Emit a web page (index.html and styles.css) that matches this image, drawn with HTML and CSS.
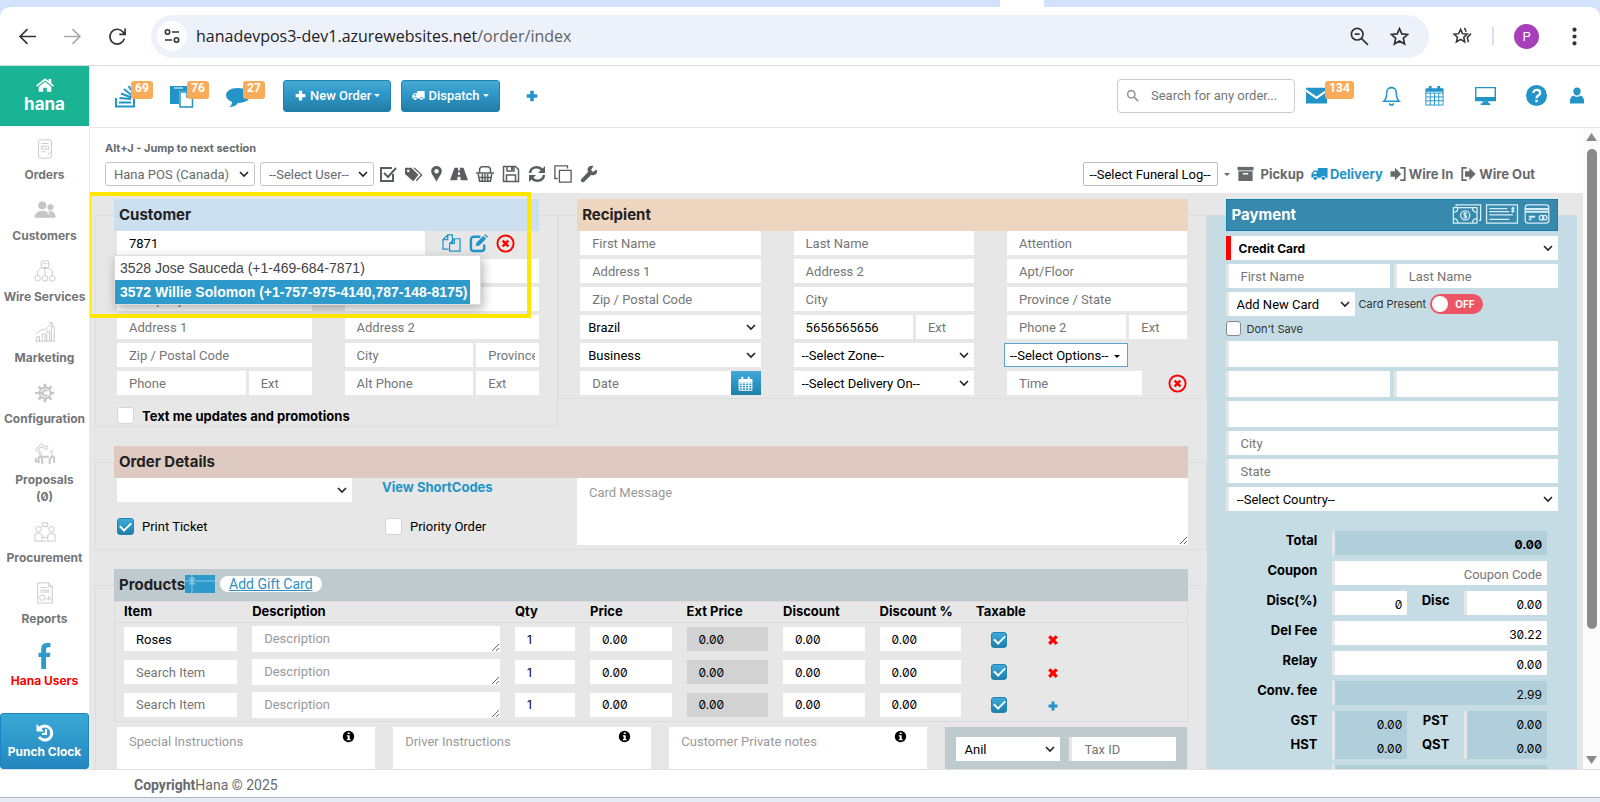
FILE: index.html
```html
<!DOCTYPE html>
<html lang="en">

<head>
    <meta charset="utf-8">
    <title>Hana POS - Order</title>
    <link rel="stylesheet" href="styles.css">
</head>

<body>
    <svg class="sprite" aria-hidden="true">
        <symbol id="i-plus" viewBox="0 0 16 16"><path d="M6 2h4v4h4v4h-4v4H6v-4H2V6h4z" /></symbol>
        <symbol id="i-times" viewBox="0 0 16 16"><path d="M4.500 1.500 8 5l3.500-3.500 3 3L11 8l3.500 3.500-3 3L8 11l-3.500 3.500-3-3L5 8 1.500 4.500z" /></symbol>
        <symbol id="i-truck" viewBox="0 0 20 16"><path d="M8 1h11.500v11.500H17a2.500 2.500 0 0 0-5 0H7.500a2.500 2.500 0 0 0-5 0H.500V7.500L3.500 4H8zM6.500 5.500H4.200L2.200 8h4.300z" fill-rule="evenodd" /><circle cx="5" cy="13" r="2" /><circle cx="14.500" cy="13" r="2" /></symbol>
        <symbol id="i-close" viewBox="0 0 20 20"><circle cx="10" cy="10" r="8.500" fill="none" stroke="currentColor" stroke-width="2" /><path d="m7 7 6 6m0-6-6 6" stroke="currentColor" stroke-width="2.600" /></symbol>
        <symbol id="i-calendar" viewBox="0 0 20 20"><path d="M1.500 5h17v14h-17zM1.500 9.500h17M1.500 12.500h17M1.500 15.700h17M5.700 8v11M10 8v11M14.300 8v11" fill="none" stroke="currentColor" stroke-width="1.300" /><path d="M1 4h18v4.500H1zM4.500 1h2.500v5H4.500zM13 1h2.500v5H13z" /></symbol>
        <symbol id="i-info" viewBox="0 0 16 16"><circle cx="8" cy="8" r="7" /><path d="M7 3h2.500v2H7zM6 6.500h3.500v4.500h1v1.500H6V11h1V8H6z" fill="#fff" /></symbol>
        <symbol id="i-mail" viewBox="0 0 20 16"><path d="M0 1h20v1.500l-10 7-10-7zM0 5l10 7 10-7v11H0z" /></symbol>
    </svg>

    <header class="browser">
        <div class="tabs"><span class="tab"></span></div>
        <div class="toolbar">
            <button class="nav-btn" aria-label="Back"><svg viewBox="0 0 18 18"><path d="M17 9H2M9 2 2 9l7 7" /></svg></button>
            <button class="nav-btn off" aria-label="Forward"><svg viewBox="0 0 18 18"><path d="M1 9h15M9 2l7 7-7 7" /></svg></button>
            <button class="nav-btn" aria-label="Reload"><svg viewBox="0 0 18 18"><path d="M15.500 11A7 7 0 1 1 14 4.500L16 7M16.200 1.500V7h-5.500" /></svg></button>
            <div class="address">
                <span class="site-info"><svg viewBox="0 0 18 18"><circle cx="4.500" cy="5" r="2.200" /><path d="M9 5h7M2 13h7" /><circle cx="13.500" cy="13" r="2.200" /></svg></span>
                <span class="url">hanadevpos3-dev1.azurewebsites.net<span class="path">/order/index</span></span>
                <button class="nav-btn" aria-label="Zoom"><svg viewBox="0 0 18 18"><circle cx="6.800" cy="6.800" r="5.500" /><path d="m11 11 6 6M4.500 6.800h4.600" /></svg></button>
                <button class="nav-btn" aria-label="Bookmark"><svg viewBox="0 0 18 18"><path d="m9 1.500 2.200 5 5.500.5-4.100 3.700 1.200 5.400L9 13.200l-4.800 2.900 1.200-5.400L1.300 7l5.500-.5z" /></svg></button>
            </div>
            <button class="nav-btn" aria-label="Favorites"><svg viewBox="0 0 20 18"><path d="m8 2.500 2 4.500 5 .5-3.700 3.300 1.100 4.900L8 13.100l-4.400 2.600 1.100-4.900L1 7.500 6 7zM12 1l2 4M19 7l-4 4 1.300 5" /></svg></button>
            <span class="divider"></span>
            <span class="avatar">P</span>
            <button class="nav-btn" aria-label="Menu"><svg viewBox="0 0 18 18"><path class="dots" d="M9 2.500v0M9 9v0M9 15.500v0" /></svg></button>
        </div>
    </header>

    <div class="app">
        <aside class="sidebar">
            <a class="logo" href="#">
                <svg viewBox="0 0 20 16"><path d="M10 1 0 9l1 1.500 9-7 9 7L20 9l-3-2.500V2h-3v2zM3 10.500l7-5.500 7 5.500V16h-5v-4.500H8V16H3z" /></svg>
                hana
            </a>
            <nav class="menu">
                <a href="#"><svg viewBox="0 0 24 24"><rect x="5" y="2" width="14" height="20" rx="2" /><path d="M8 6h8M8 9h8v3H8zM8 15h5M15 19l3-4" /></svg>Orders</a>
                <a href="#"><svg class="solid" viewBox="0 0 24 24"><circle cx="9" cy="7" r="4" /><circle cx="18" cy="9" r="3" /><path d="M1 20c0-9 16-9 16 0zM18 20c0-3-1-5-2-6 4-1 7 1 7 6z" /></svg>Customers</a>
                <a href="#"><svg viewBox="0 0 24 24"><rect x="8" y="1" width="8" height="7" rx="1" /><path d="M10 4h4M12 8v9M4 17v-5l3-3h10l3 3v5" /><circle cx="4" cy="20" r="3" /><circle cx="12" cy="20" r="3" /><circle cx="20" cy="20" r="3" /></svg>Wire Services</a>
                <a href="#"><svg viewBox="0 0 24 24"><path d="M1 22h22M3 22v-5h3v5M9 22v-8h3v8M14 22V11h3v11M19 22V6h3v16M2 14l7-5 3 1 8-8M16 2h4v4" /></svg>Marketing</a>
                <a href="#"><svg viewBox="0 0 24 24"><circle cx="12" cy="12" r="6" stroke-width="2" /><path stroke-width="3" d="M12 2v4M12 18v4M18 12h4M5 5l2.500 2.500M16.500 16.500 19 19M19 5l-2.500 2.500M7.500 16.500 5 19" /><path d="M1 12h10M14.500 10a3 3 0 1 0 0 4" stroke-width="2" /></svg>Configuration</a>
                <a href="#"><svg viewBox="0 0 24 24"><circle cx="4" cy="7" r="2" /><circle cx="8" cy="3" r="2" /><circle cx="13" cy="5" r="2" /><circle cx="7" cy="11" r="1.500" /><circle cx="19" cy="10" r="1.500" /><path d="M5 22v-6l2-2 2 4v5M22 22v-6l-2-2-3 4v5M9 15h7M2 16v4h4" stroke-width="2" /></svg>Proposals<br>(0)</a>
                <a href="#"><svg viewBox="0 0 24 24"><circle cx="5" cy="9" r="3" /><circle cx="19" cy="9" r="3" /><path d="M9 2h6v4H9zM1 22v-7l4-2 4 2v7zM15 22v-7l4-2 4 2v7zM9 18h6M10 22h4" /></svg>Procurement</a>
                <a href="#"><svg viewBox="0 0 24 24"><path d="M4 1h12l4 4v18H4zM16 1v4h4M7 6h7M7 9h10M7 11h10" /><circle cx="9" cy="17" r="3" /><path d="M14 20v-3M16 20v-5M18 20v-3" /></svg>Reports</a>
                <a class="fb" href="#"><svg viewBox="0 0 24 24"><path d="M17 0v4h-2q-2 0-2 2v3h4l-.500 4H13v11H8.500V13H6V9h2.500V5.500Q8.500 0 14 0z" /></svg>Hana Users</a>
            </nav>
            <button class="punch">
                <svg viewBox="0 0 20 20"><path d="M4.500 5.500a7 7 0 1 1-.5 8.500" fill="none" stroke="currentColor" stroke-width="3" /><path d="M1.500 1v7.500H9z" /><path d="M11 6v5H7" fill="none" stroke="currentColor" stroke-width="2" /></svg>
                Punch Clock
            </button>
        </aside>

        <div class="main">
            <header class="topbar">
                <a class="counter" href="#" aria-label="Queue"><svg viewBox="0 0 24 24"><path d="M2 14v8.500h18V14M5 18.500h12M5.500 14l11.500 1M7 9.500l10.500 4M10 5l8.500 7M14.500 2l6 8.500" fill="none" stroke="currentColor" stroke-width="2" /></svg><span class="badge">69</span></a>
                <a class="counter" href="#" aria-label="Tasks"><svg viewBox="0 0 24 24"><path d="M0 2h17v5H9v13H0z" /><path d="M4 4h9" stroke="#fff" /><path d="M10 8h7l5.500 5v10H10zM17 8v5h5.500" fill="#fff" stroke="currentColor" stroke-width="1.500" /></svg><span class="badge">76</span></a>
                <a class="counter" href="#" aria-label="Messages"><svg viewBox="0 0 24 24"><path d="M12 4c16 0 16 15 0 15-2 3-6 4-9 4 2-1 3-3 3-5C-4 14-1 4 12 4z" /></svg><span class="badge">27</span></a>
                <button class="btn"><svg><use href="#i-plus" /></svg>New Order<i class="caret"></i></button>
                <button class="btn"><svg><use href="#i-truck" /></svg>Dispatch<i class="caret"></i></button>
                <button class="add" aria-label="Add"><svg><use href="#i-plus" /></svg></button>
                <label class="search"><svg viewBox="0 0 16 16"><circle cx="6.500" cy="6.500" r="4.500" /><path d="m10 10 5 5" /></svg><input type="text" placeholder="Search for any order..." aria-label="Search"></label>
                <a class="counter mail" href="#" aria-label="Mail"><svg><use href="#i-mail" /></svg><span class="badge">134</span></a>
                <div class="top-icons">
                    <a href="#" aria-label="Alerts"><svg viewBox="0 0 20 22"><path d="M2 17c3-3 3-6 3-9 0-7 10-7 10 0 0 3 0 6 3 9zM8 19a2 2 0 0 0 4 0" fill="none" stroke="currentColor" stroke-width="1.600" /></svg></a>
                    <a href="#" aria-label="Calendar"><svg viewBox="0 0 20 22"><path d="M1 4h18v17H1zM1 8.500h18M1 12.500h18M1 16.500h18M5.500 8v13M10 8v13M14.500 8v13" fill="none" stroke="currentColor" /><path d="M1 4h18v3H1zM4 1h3v5H4zM13 1h3v5h-3z" /></svg></a>
                    <a class="screen" href="#" aria-label="Screen"><svg viewBox="0 0 22 20"><path d="M0 1h22v15H0zM1.500 2.500v9h19v-9z" fill-rule="evenodd" /><path d="M8 16h6v2h2v2H6v-2h2z" /></svg></a>
                    <a href="#" aria-label="Help"><svg viewBox="0 0 20 20"><circle cx="10" cy="10" r="10" /><path d="M7 7.500c0-4 6.500-3.500 6.500 0C13.500 10 10 9.500 10 12.500M10 14v2.500" fill="none" stroke="#fff" stroke-width="2.200" /></svg></a>
                    <a href="#" aria-label="Account"><svg viewBox="0 0 18 20"><path d="M9 1c6 0 5 9 0 9S3 1 9 1zM1 19c-.500-5 1-8 4-9 2 2 6 2 8 0 3 1 4.500 4 4 9z" /></svg></a>
                </div>
            </header>

            <div class="scroller">
                <main class="page">
                    <p class="hint">Alt+J - Jump to next section</p>
                    <div class="tools">
                        <select class="tool-select" aria-label="Store"><option>Hana POS (Canada)</option></select>
                        <select class="tool-select user" aria-label="User"><option>--Select User--</option></select>
                        <div class="tool-icons">
                            <svg viewBox="0 0 18 18"><path d="M14 9v7H2V3h11M5 8l4 4 8-9" fill="none" stroke="currentColor" stroke-width="2" /></svg>
                            <svg viewBox="0 0 20 18"><path fill-rule="evenodd" d="M0 2h7l8 8-6 7-9-8zM3.500 4a1.500 1.500 0 1 0 .1 0z" /><path d="M9 2h2l8.500 8-6.500 7-1-1 5.500-6z" /></svg>
                            <svg class="narrow" viewBox="0 0 12 18"><path fill-rule="evenodd" d="M6 0c4 0 6 3 6 6S8 13 6 18C4 13 0 9 0 6s2-6 6-6zm0 3.500a2.500 2.500 0 1 0 .1 0z" /></svg>
                            <svg viewBox="0 0 20 18"><path d="M5 2h4v3h2V2h4l5 14h-8l-.500-4H8.500L8 16H0zM9 7l-.300 3h2.600L11 7z" fill-rule="evenodd" /></svg>
                            <svg viewBox="0 0 20 18"><path d="M4 7V3l2-2h8l2 2v4M0 8h20M2.500 9l1.500 8h12l1.500-8M3 13h14M7 9v8M10 9v8M13 9v8" fill="none" stroke="currentColor" stroke-width="1.700" /></svg>
                            <svg viewBox="0 0 18 18"><path d="M1.500 1.500h12l3 3v12h-15zM5 1.500V6h7V1.500M4.500 16v-6h9v6" fill="none" stroke="currentColor" stroke-width="1.500" /><path d="M9 2h2v3H9z" /></svg>
                            <svg viewBox="0 0 18 18"><path d="M2 8c1-7 9-7 12-3M16 10c-1 7-9 7-12 3" fill="none" stroke="currentColor" stroke-width="2.500" /><path d="M17 1v7h-7zM1 17v-7h7z" /></svg>
                            <svg viewBox="0 0 20 20"><path d="M6 6h13v13H6zM4 15H1V1h14v3" fill="none" stroke="currentColor" stroke-width="1.500" /></svg>
                            <svg viewBox="0 0 18 18"><path d="M16.500 4.500 13 7l-2-2 2.500-4C8 0 7 4 8 7l-7 7.500Q.500 18 4 17l7-7c5 1 7-2 5.500-5.500z" /></svg>
                        </div>
                        <div class="order-type">
                            <button class="funeral">--Select Funeral Log--</button><i class="caret"></i>
                            <a href="#"><svg viewBox="0 0 18 18"><path d="M0 1h18v4H0z" /><path fill-rule="evenodd" d="M1 6h16v11H1zm5 2v1.500h6V8z" /></svg><span class="first">Pickup</span></a>
                            <a class="on" href="#"><svg><use href="#i-truck" /></svg>Delivery</a>
                            <a href="#"><svg viewBox="0 0 18 18"><path d="M0 6h5V2l7 7-7 7v-4H0z" /><path d="M11 2h5v14h-5" fill="none" stroke="currentColor" stroke-width="2" /></svg>Wire In</a>
                            <a href="#"><svg viewBox="0 0 18 18"><path d="M5 6h5V2l7 7-7 7v-4H5z" /><path d="M7 2H2v14h5" fill="none" stroke="currentColor" stroke-width="2" /></svg>Wire Out</a>
                        </div>
                    </div>

                    <form class="order">
                        <div class="order-left">
                            <div class="people">
                                <fieldset class="customer">
                                    <legend>Customer</legend>
                                    <div class="lookup">
                                        <input type="text" value="7871" aria-label="Customer">
                                        <button type="button" aria-label="Copy"><svg viewBox="0 0 20 20"><path d="M6 1h5v10M1 6v10h6M6 1 1 6h5zM13 5h6v13H8V10zM13 5v5H8" fill="none" stroke="currentColor" stroke-width="1.300" /></svg></button>
                                        <button type="button" aria-label="Edit"><svg viewBox="0 0 20 20"><path d="M12 3H5Q2 3 2 6v9q0 3 3 3h8q3 0 3-3v-4" fill="none" stroke="currentColor" stroke-width="2.600" /><path d="m7 13 1-4 7-7 3 3-7 7zM16 1l1-1 3 3-1 1z" /></svg></button>
                                        <button type="button" class="red" aria-label="Clear"><svg><use href="#i-close" /></svg></button>
                                        <ul class="suggest">
                                            <li>3528 Jose Sauceda (+1-469-684-7871)</li>
                                            <li class="active">3572 Willie Solomon (+1-757-975-4140,787-148-8175)</li>
                                        </ul>
                                    </div>
                                    <div class="cols two">
                                        <input type="text" aria-label="First Name">
                                        <input type="text" aria-label="Last Name">
                                        <input type="text" placeholder="Company" aria-label="Company">
                                        <input type="text" aria-label="Email">
                                        <input type="text" placeholder="Address 1" aria-label="Address 1">
                                        <input type="text" placeholder="Address 2" aria-label="Address 2">
                                        <input type="text" placeholder="Zip / Postal Code" aria-label="Zip">
                                        <div class="split"><input type="text" placeholder="City" aria-label="City"><input type="text" placeholder="Province / State" aria-label="Province"></div>
                                        <div class="split"><input type="text" placeholder="Phone" aria-label="Phone"><input type="text" placeholder="Ext" aria-label="Ext"></div>
                                        <div class="split"><input type="text" placeholder="Alt Phone" aria-label="Alt Phone"><input type="text" placeholder="Ext" aria-label="Alt Ext"></div>
                                    </div>
                                    <label class="check bold"><input type="checkbox">Text me updates and promotions</label>
                                    <div class="highlight"></div>
                                </fieldset>

                                <fieldset class="recipient">
                                    <legend>Recipient</legend>
                                    <div class="cols three">
                                        <input type="text" placeholder="First Name" aria-label="First Name">
                                        <input type="text" placeholder="Last Name" aria-label="Last Name">
                                        <input type="text" placeholder="Attention" aria-label="Attention">
                                        <input type="text" placeholder="Address 1" aria-label="Address 1">
                                        <input type="text" placeholder="Address 2" aria-label="Address 2">
                                        <input type="text" placeholder="Apt/Floor" aria-label="Apt">
                                        <input type="text" placeholder="Zip / Postal Code" aria-label="Zip">
                                        <input type="text" placeholder="City" aria-label="City">
                                        <input type="text" placeholder="Province / State" aria-label="Province">
                                        <select aria-label="Country"><option>Brazil</option></select>
                                        <div class="split"><input type="text" value="5656565656" aria-label="Phone"><input type="text" placeholder="Ext" aria-label="Ext"></div>
                                        <div class="split"><input type="text" placeholder="Phone 2" aria-label="Phone 2"><input type="text" placeholder="Ext" aria-label="Ext 2"></div>
                                        <select aria-label="Location"><option>Business</option></select>
                                        <select aria-label="Zone"><option>--Select Zone--</option></select>
                                        <button type="button" class="options">--Select Options--<i class="caret"></i></button>
                                        <div class="date"><input type="text" placeholder="Date" aria-label="Date"><button type="button" aria-label="Pick date"><svg><use href="#i-calendar" /></svg></button></div>
                                        <select aria-label="Delivery On"><option>--Select Delivery On--</option></select>
                                        <div class="time"><input type="text" placeholder="Time" aria-label="Time"><button type="button" class="red" aria-label="Clear time"><svg><use href="#i-close" /></svg></button></div>
                                    </div>
                                </fieldset>
                            </div>

                            <fieldset class="details">
                                <legend>Order Details</legend>
                                <div class="details-grid">
                                    <div class="details-form">
                                        <select aria-label="Occasion"><option></option></select>
                                        <a href="#">View ShortCodes</a>
                                        <label class="check"><input type="checkbox" checked>Print Ticket</label>
                                        <label class="check"><input type="checkbox">Priority Order</label>
                                    </div>
                                    <textarea placeholder="Card Message" aria-label="Card Message"></textarea>
                                </div>
                            </fieldset>

                            <fieldset class="products">
                                <legend>Products<svg class="gift" viewBox="0 0 30 18"><path d="M0 0h30v18H0z" /><path d="M0 6h30M7 0v18M7 6 4 3h3zM7 6l3-3H7zM7 6l-3 3h3zM7 6l3 3H7z" fill="none" stroke="#8cc8e4" /></svg><a class="pill" href="#">Add Gift Card</a></legend>
                                <table>
                                    <thead>
                                        <tr>
                                            <th class="w-item">Item</th>
                                            <th class="w-desc">Description</th>
                                            <th class="w-qty">Qty</th>
                                            <th class="w-num">Price</th>
                                            <th class="w-num">Ext Price</th>
                                            <th class="w-num">Discount</th>
                                            <th class="w-num">Discount %</th>
                                            <th class="w-tax">Taxable</th>
                                            <th class="w-act"></th>
                                            <th></th>
                                        </tr>
                                    </thead>
                                    <tbody>
                                        <tr>
                                            <td><input type="text" value="Roses" placeholder="Search Item" aria-label="Item"></td>
                                            <td><textarea placeholder="Description" aria-label="Description"></textarea></td>
                                            <td><input class="num" type="text" value="1" aria-label="Qty"></td>
                                            <td><input class="num" type="text" value="0.00" aria-label="Price"></td>
                                            <td><input class="num" type="text" value="0.00" aria-label="Ext Price" readonly></td>
                                            <td><input class="num" type="text" value="0.00" aria-label="Discount"></td>
                                            <td><input class="num" type="text" value="0.00" aria-label="Discount %"></td>
                                            <td class="center"><input type="checkbox" checked aria-label="Taxable"></td>
                                            <td class="center"><button type="button" class="red" aria-label="Remove"><svg><use href="#i-times" /></svg></button></td>
                                            <td></td>
                                        </tr>
                                        <tr>
                                            <td><input type="text" placeholder="Search Item" aria-label="Item"></td>
                                            <td><textarea placeholder="Description" aria-label="Description"></textarea></td>
                                            <td><input class="num" type="text" value="1" aria-label="Qty"></td>
                                            <td><input class="num" type="text" value="0.00" aria-label="Price"></td>
                                            <td><input class="num" type="text" value="0.00" aria-label="Ext Price" readonly></td>
                                            <td><input class="num" type="text" value="0.00" aria-label="Discount"></td>
                                            <td><input class="num" type="text" value="0.00" aria-label="Discount %"></td>
                                            <td class="center"><input type="checkbox" checked aria-label="Taxable"></td>
                                            <td class="center"><button type="button" class="red" aria-label="Remove"><svg><use href="#i-times" /></svg></button></td>
                                            <td></td>
                                        </tr>
                                        <tr>
                                            <td><input type="text" placeholder="Search Item" aria-label="Item"></td>
                                            <td><textarea placeholder="Description" aria-label="Description"></textarea></td>
                                            <td><input class="num" type="text" value="1" aria-label="Qty"></td>
                                            <td><input class="num" type="text" value="0.00" aria-label="Price"></td>
                                            <td><input class="num" type="text" value="0.00" aria-label="Ext Price" readonly></td>
                                            <td><input class="num" type="text" value="0.00" aria-label="Discount"></td>
                                            <td><input class="num" type="text" value="0.00" aria-label="Discount %"></td>
                                            <td class="center"><input type="checkbox" checked aria-label="Taxable"></td>
                                            <td class="center"><button type="button" class="blue" aria-label="Add row"><svg><use href="#i-plus" /></svg></button></td>
                                            <td></td>
                                        </tr>
                                    </tbody>
                                </table>
                                <div class="notes">
                                    <div class="note"><textarea placeholder="Special Instructions" aria-label="Special Instructions"></textarea><svg><use href="#i-info" /></svg></div>
                                    <div class="note"><textarea placeholder="Driver Instructions" aria-label="Driver Instructions"></textarea><svg><use href="#i-info" /></svg></div>
                                    <div class="note"><textarea placeholder="Customer Private notes" aria-label="Customer Private notes"></textarea><svg><use href="#i-info" /></svg></div>
                                    <div class="tax-box">
                                        <select aria-label="Employee"><option>Anil</option></select>
                                        <input type="text" placeholder="Tax ID" aria-label="Tax ID">
                                    </div>
                                </div>
                            </fieldset>
                        </div>

                        <fieldset class="payment">
                            <legend>Payment
                                <span class="pay-icons">
                                    <svg viewBox="0 0 32 22"><path d="M4 3V1h27v17h-2M1 4h26v17H1zM1 9q5 0 5-5M1 16q5 0 5 5M27 9q-5 0-5-5M27 16q-5 0-5 5" /><circle cx="14" cy="12.500" r="5" /><path d="M16 10.500c-3-2-5 1-2 2s1 4-2 2M14 9v7" /></svg>
                                    <svg class="wide" viewBox="0 0 36 22"><path d="M1 1h34v20H1zM4 5h20M4 8.500h22M4 12h26M4 17h22M32 5c-3-2-4 1-2 1.500s1 3-2 1.500M30 3v7" /></svg>
                                    <svg viewBox="0 0 28 22"><rect x="1" y="1" width="26" height="20" rx="3" /><path d="M1 5.500h26M1 8.500h26M5 14h7M5 17h3" stroke-width="2" /><circle cx="19" cy="15" r="2.500" /><circle cx="22.500" cy="15" r="2.500" /></svg>
                                </span>
                            </legend>
                            <div class="card-form">
                                <select class="method full" aria-label="Method"><option>Credit Card</option></select>
                                <input type="text" placeholder="First Name" aria-label="First Name">
                                <input type="text" placeholder="Last Name" aria-label="Last Name">
                                <div class="card-row full">
                                    <select aria-label="Card"><option>Add New Card</option></select>
                                    <span>Card Present</span>
                                    <button type="button" class="toggle" role="switch" aria-checked="false" aria-label="Card Present"><span class="knob"></span>OFF</button>
                                </div>
                                <label class="save full"><input type="checkbox">Don't Save</label>
                                <input type="text" class="full tall" aria-label="Card number">
                                <input type="text" class="tall" aria-label="Expiry">
                                <input type="text" class="tall" aria-label="CVV">
                                <input type="text" class="full tall" aria-label="Billing address">
                                <input type="text" class="full" placeholder="City" aria-label="City">
                                <input type="text" class="full" placeholder="State" aria-label="State">
                                <select class="full" aria-label="Country"><option>--Select Country--</option></select>
                            </div>
                            <div class="totals">
                                <label for="total">Total</label><input class="span bold num" type="text" id="total" value="0.00" readonly>
                                <label for="coupon">Coupon</label><input class="span" type="text" id="coupon" placeholder="Coupon Code">
                                <label for="discp">Disc(%)</label><input class="num" type="text" id="discp" value="0"><label class="mid" for="disc">Disc</label><input class="num" type="text" id="disc" value="0.00">
                                <label for="del">Del Fee</label><input class="span num" type="text" id="del" value="30.22">
                                <label for="relay">Relay</label><input class="span num" type="text" id="relay" value="0.00">
                                <label for="conv">Conv. fee</label><input class="span num" type="text" id="conv" value="2.99" readonly>
                            </div>
                            <div class="totals taxes">
                                <label for="gst">GST</label><input class="num" type="text" id="gst" value="0.00" readonly><label class="mid" for="pst">PST</label><input class="num" type="text" id="pst" value="0.00" readonly>
                                <label for="hst">HST</label><input class="num" type="text" id="hst" value="0.00" readonly><label class="mid" for="qst">QST</label><input class="num" type="text" id="qst" value="0.00" readonly>
                            </div>
                            <div class="totals">
                                <span></span><input class="span" type="text" aria-label="Grand total" readonly>
                            </div>
                        </fieldset>
                    </form>
                </main>
                <div class="scrollbar"><i class="up"></i><i class="thumb"></i><i class="down"></i></div>
            </div>
        </div>
    </div>

    <footer class="footer"><b>Copyright</b>Hana © 2025</footer>
</body>

</html>
```

FILE: styles.css
```css
* {
    box-sizing: border-box;
}

body {
    margin: 0;
    height: 100vh;
    display: flex;
    flex-direction: column;
    overflow: hidden;
    background: #fff;
    font-family: Roboto, "Liberation Sans", sans-serif;
    font-size: 13px;
    color: #676a6c;
}

a {
    color: inherit;
    text-decoration: none;
}

button {
    border: 0;
    padding: 0;
    background: none;
    color: inherit;
    font: inherit;
    cursor: pointer;
}

svg {
    fill: currentColor;
    flex: none;
}

.sprite {
    display: none;
}

.caret {
    display: inline-block;
    margin-left: 4px;
    vertical-align: middle;
    border: 3px solid transparent;
    border-top-color: currentColor;
    border-bottom: 0;
}

/* browser chrome */
.browser {
    flex: none;
    background: #d3e3fd;
    border-bottom: 1px solid #dcdcdc;
}

.tabs {
    height: 7px;
    display: flex;
    justify-content: flex-end;
}

.tab {
    width: 44px;
    margin-right: 556px;
    background: #fff;
}

.toolbar {
    height: 58px;
    padding: 0 16px 0 18px;
    display: flex;
    align-items: center;
    gap: 26px;
    background: #fff;
    border-radius: 10px 10px 0 0;
}

.nav-btn {
    width: 19px;
    height: 19px;
    color: #333;
}

.nav-btn.off {
    color: #aaa;
}

.nav-btn svg,
.site-info svg {
    display: block;
    width: 100%;
    fill: none;
    stroke: currentColor;
    stroke-width: 1.600;
}

.nav-btn .dots {
    stroke-width: 4;
    stroke-linecap: round;
}

.address {
    flex: 1;
    height: 43px;
    margin: 0 -2px 0 -2px;
    padding: 0 20px 0 6px;
    display: flex;
    align-items: center;
    gap: 21px;
    border-radius: 22px;
    background: #edf1fa;
}

.site-info {
    width: 30px;
    height: 30px;
    padding: 6px;
    margin-right: -12px;
    border-radius: 50%;
    background: #fff;
    color: #333;
}

.url {
    flex: 1;
    font-family: "Open Sans", "Noto Sans", sans-serif;
    font-size: 16px;
    color: #1f2125;
}

.path {
    color: #5f6368;
}

.divider {
    width: 2px;
    height: 18px;
    margin: 0 -6px;
    background: #cfdffc;
}

.avatar {
    width: 25px;
    height: 25px;
    border-radius: 50%;
    background: #a63fb9;
    color: #fff;
    text-align: center;
    line-height: 25px;
}

/* app frame */
.app {
    flex: 1;
    min-height: 0;
    display: grid;
    grid-template-columns: 90px minmax(0, 1fr);
    grid-template-rows: minmax(0, 1fr);
}

.sidebar {
    display: flex;
    flex-direction: column;
    border-right: 1px solid #e7eaec;
    font-family: Inter, sans-serif;
    font-weight: 700;
    font-variant-numeric: slashed-zero;
}

.logo {
    height: 60px;
    display: flex;
    flex-direction: column;
    align-items: center;
    justify-content: center;
    gap: 1px;
    background: #1ab394;
    color: #fff;
    font-size: 17px;
    line-height: 22px;
}

.logo svg {
    width: 18px;
    height: 15px;
}

.menu {
    flex: 1;
    min-height: 0;
    padding-top: 12px;
    color: #737577;
    font-size: 12px;
    line-height: 17px;
    text-align: center;
}

.menu a {
    display: block;
    padding-bottom: 16px;
    white-space: nowrap;
}

.menu svg {
    display: block;
    width: 22px;
    height: 22px;
    margin: 0 auto 6px;
    fill: none;
    stroke: #c6c6c6;
}

.menu .solid {
    fill: #c6c6c6;
}

.menu .fb {
    color: #f00;
}

.menu .fb svg {
    height: 26px;
    width: 26px;
    margin-bottom: 3px;
    fill: #2e9acb;
    stroke: none;
}

.punch {
    height: 56px;
    border: 1px solid #1c84c6;
    border-radius: 3px;
    background: linear-gradient(#39a8d5, #2487bf);
    color: #fff;
    font-size: 12px;
}

.punch svg {
    display: block;
    width: 20px;
    height: 20px;
    margin: 0 auto 1px;
}

.main {
    display: flex;
    flex-direction: column;
    min-height: 0;
}

.topbar {
    flex: none;
    height: 62px;
    padding: 0 15px 2px 24px;
    display: flex;
    align-items: center;
    border-bottom: 1px solid #e5e5e5;
    color: #2394c8;
}

.counter {
    display: flex;
    align-items: flex-end;
    width: 56px;
}

.counter svg {
    width: 24px;
    height: 24px;
}

.badge {
    align-self: flex-start;
    width: 22px;
    height: 18px;
    margin: -3px 0 9px -7px;
    border-radius: 3px;
    background: #f8ac59;
    color: #fff;
    font: 700 12px/14px Roboto, sans-serif;
    text-align: center;
}

.btn {
    display: flex;
    align-items: center;
    gap: 3px;
    height: 32px;
    padding: 0 10px;
    border: 1px solid #1c84b2;
    border-radius: 3px;
    background: linear-gradient(#4aa9d2, #2e9acb 40%, #237ca4);
    color: #fff;
    font-size: 13px;
    font-weight: 500;
}

.btn + .btn {
    margin-left: 10px;
}

.btn svg {
    width: 13px;
    height: 13px;
}

.btn .caret {
    margin-left: 0;
}

.counter + .btn {
    margin-left: 1px;
}

.add {
    margin: 0 auto 0 25px;
}

.add svg {
    display: block;
    width: 14px;
    height: 14px;
}

.search {
    display: flex;
    align-items: center;
    width: 178px;
    height: 34px;
    padding: 0 8px;
    border: 1px solid #ccc;
    border-radius: 4px;
}

.search svg {
    width: 13px;
    height: 13px;
    fill: none;
    stroke: #999;
    stroke-width: 2;
}

.search input {
    min-width: 0;
    border: 0;
    padding: 0 0 0 12px;
    font-size: 13px;
}

.mail {
    width: 75px;
    margin-left: 11px;
}

.mail svg {
    width: 21px;
    height: 18px;
    margin-bottom: 4px;
}

.mail .badge {
    width: 29px;
    margin-left: -2px;
}

.top-icons {
    display: flex;
    align-items: center;
    gap: 22px;
}

.top-icons svg {
    display: block;
    width: 21px;
    height: 21px;
}

.top-icons .screen {
    margin: 0 8px;
}

.top-icons a:last-child svg {
    width: 16px;
}

.scroller {
    flex: 1;
    min-height: 0;
    display: grid;
    grid-template-columns: minmax(0, 1fr) 17px;
}

.scrollbar {
    display: flex;
    flex-direction: column;
    align-items: center;
    padding: 5px 0 5px;
    background: #fbfbfb;
}

.scrollbar i {
    background: #8a8a8a;
}

.up,
.down {
    width: 11px;
    height: 8px;
    clip-path: polygon(50% 0, 100% 100%, 0 100%);
}

.down {
    margin-top: auto;
    clip-path: polygon(0 0, 100% 0, 50% 100%);
}

.thumb {
    width: 10px;
    height: 76%;
    margin-top: 8px;
    border-radius: 5px;
}

.page {
    overflow: hidden;
}

.hint {
    margin: 0;
    padding: 13px 0 7px 15px;
    font: 700 11px/14px Inter, sans-serif;
}

/* tool row above the order form */
.tools {
    display: flex;
    align-items: center;
    height: 24px;
    margin: 0 48px 7px 15px;
}

.tools .tool-select {
    width: 150px;
    height: 24px;
    margin-right: 5px;
    padding: 0 20px 0 8px;
    border: 1px solid #c5c5c5;
    border-radius: 3px;
    color: #676a6c;
}

.tools .user {
    width: 114px;
    padding: 0 16px 0 8px;
}

.tool-icons {
    display: flex;
    gap: 8px;
    align-items: center;
    color: #5b5e60;
}

.tool-icons svg {
    width: 18px;
    height: 18px;
}

.tool-icons .narrow {
    width: 11px;
    height: 16px;
}

.order-type {
    margin-left: auto;
    display: flex;
    align-items: center;
    font: 700 13px Inter, sans-serif;
}

.order-type a {
    display: flex;
    align-items: center;
    gap: 2px;
    margin-left: 7px;
}

.order-type svg {
    width: 17px;
    height: 16px;
}

.order-type .first {
    padding-left: 5px;
}

.order-type .on {
    color: #2394c8;
}

.funeral {
    height: 24px;
    margin-right: 2px;
    padding: 0 6px;
    border: 1px solid #bbb;
    border-radius: 2px;
    font: 13px Roboto, sans-serif;
    color: #000;
}

/* form controls */
input[type="text"],
select,
textarea {
    width: 100%;
    min-width: 0;
    margin: 0;
    background-color: #fff;
    color: #000;
    font: 13px Roboto, "Liberation Sans", sans-serif;
    outline: 0;
}

.order input[type="text"],
.order select {
    height: 24px;
    padding: 0 4px 0 12px;
    border: 0;
    border-left: 3px solid #e7e7e7;
    border-radius: 0;
}

.order .num[type="text"] {
    font-family: Inter, sans-serif;
    font-size: 12px;
    font-variant-numeric: slashed-zero;
}

select,
.order select {
    appearance: none;
    background-image: url("data:image/svg+xml,%3Csvg xmlns='http://www.w3.org/2000/svg' viewBox='0 0 10 7'%3E%3Cpath d='M1 1l4 4 4-4' fill='none' stroke='%23222' stroke-width='1.600'/%3E%3C/svg%3E");
    background-repeat: no-repeat;
    background-position: right 5px center;
    background-size: 10px 7px;
}

.order select {
    padding: 0 18px 0 8px;
}

::placeholder {
    color: #767676;
    opacity: 1;
}

.order input[type="text"]:read-only {
    background-color: #d2d2d2;
}

textarea {
    display: block;
    border: 0;
    padding: 7px 12px;
}

textarea::placeholder {
    color: #999;
}

input[type="checkbox"] {
    appearance: none;
    flex: none;
    width: 17px;
    height: 17px;
    margin: 0;
    display: inline-grid;
    place-content: center;
    border: 1px solid #d5d5d5;
    border-radius: 3px;
    background: #fff;
}

input[type="checkbox"]:checked {
    border-color: #2184b4;
    background: linear-gradient(#45a9d6, #2e9acb 40%, #1f7ea9);
}

input[type="checkbox"]:checked::after {
    content: "";
    width: 5px;
    height: 9px;
    margin-bottom: 3px;
    border: solid #fff;
    border-width: 0 2px 2px 0;
    transform: rotate(45deg);
}

.order .red {
    color: #f00;
}

.order .blue {
    color: #2394c8;
}

/* order form */
.order {
    display: grid;
    grid-template-columns: minmax(0, 3fr) minmax(0, 1fr);
    padding: 6px 6px 0 5px;
    background: #e7e7e7;
}

fieldset {
    min-width: 0;
    margin: 0;
    padding: 0 18px;
    border: 1px solid #dedede;
}

legend {
    display: flex;
    align-items: center;
    width: 100%;
    height: 32px;
    padding: 0 5px 2px;
    color: #222;
    font: 700 15px Inter, sans-serif;
}

.customer legend {
    background: #cbdfee;
}

.recipient legend {
    background: #eed5c0;
}

.details legend {
    background: #dfcac1;
}

.products legend {
    background: #bfcacf;
}

.people {
    display: grid;
    grid-template-columns: minmax(0, 5fr) minmax(0, 7fr);
    align-items: start;
}

.customer {
    position: relative;
}

.recipient {
    padding-bottom: 3px;
}

.lookup {
    position: relative;
    display: flex;
    align-items: center;
    gap: 8px;
    margin-bottom: 4px;
    padding-right: 24px;
    color: #2394c8;
}

.lookup input {
    margin-right: 9px;
}

.lookup svg,
.time svg {
    display: block;
    width: 19px;
    height: 19px;
}

.suggest {
    position: absolute;
    z-index: 2;
    top: 24px;
    left: 0;
    margin: 0;
    padding: 0 10px 0 0;
    list-style: none;
    background: #fff;
    border: 1px solid #ddd;
    box-shadow: 2px 4px 10px rgba(0, 0, 0, 0.3);
    color: #444;
    font: 14px/24px "Liberation Sans", Arial, sans-serif;
    white-space: nowrap;
}

.suggest li {
    padding: 0 3px 0 5px;
}

.suggest .active {
    background: #2e9acb;
    color: #fff;
    font-weight: 700;
}

.highlight {
    position: absolute;
    z-index: 3;
    top: -39px;
    left: -9px;
    right: 26px;
    height: 126px;
    border: 4px solid #ffe600;
    pointer-events: none;
}

.cols {
    display: grid;
    gap: 4px 30px;
}

.two {
    grid-template-columns: repeat(2, minmax(0, 1fr));
}

.three {
    grid-template-columns: repeat(3, minmax(0, 1fr));
}

.split {
    display: grid;
    grid-template-columns: 2fr 1fr;
}

.check {
    display: flex;
    align-items: center;
    gap: 8px;
    padding-left: 3px;
    color: #000;
}

.check.bold {
    height: 31px;
    padding-top: 10px;
    margin-bottom: 0;
    font: 700 13px Inter, sans-serif;
}

.options {
    justify-self: start;
    height: 24px;
    padding: 0 7px 0 5px;
    border: 1px solid #5ba6cd;
    background: #fff;
    color: #000;
}

.options .caret {
    margin-left: 6px;
}

.date {
    display: grid;
    grid-template-columns: 1fr 30px;
}

.date button {
    display: grid;
    place-content: center;
    background: linear-gradient(#45a9d6, #2e9acb 40%, #1f7ea9);
    color: #fff;
}

.date svg {
    width: 15px;
    height: 15px;
}

.time {
    display: grid;
    grid-template-columns: 3fr 1fr;
}

.time button {
    justify-self: end;
}

.details {
    margin-top: 19px;
    padding-bottom: 4px;
}

.details-grid {
    display: grid;
    grid-template-columns: minmax(0, 3fr) minmax(0, 4fr);
    column-gap: 5px;
}

.details-form {
    display: grid;
    grid-template-columns: 238px 1fr;
    column-gap: 30px;
    align-content: start;
    row-gap: 10px;
}

.details-form a {
    color: #2394c8;
    font: 700 13px/19px Inter, sans-serif;
}

.details-form .check {
    height: 24px;
    padding-top: 5px;
}

.details textarea {
    height: 67px;
}

.products {
    margin-top: 19px;
}

.gift {
    width: 30px;
    height: 18px;
    color: #2e9acb;
}

.pill {
    margin-left: 5px;
    padding: 0 9px;
    border-radius: 8px;
    background: #fff;
    color: #2e8fc0;
    font: 14px/16px Roboto, sans-serif;
    text-decoration: underline;
}

table {
    width: 100%;
    table-layout: fixed;
    border: 1px solid #dcdcdc;
    border-collapse: collapse;
}

th {
    height: 21px;
    padding: 0 0 3px 9px;
    border-bottom: 1px solid #dcdcdc;
    color: #000;
    font: 700 13px/16px Inter, sans-serif;
    text-align: left;
    white-space: nowrap;
}

td {
    height: 33px;
    padding: 0 6px;
}

td textarea {
    height: 26px;
    padding: 5px 12px;
    border-left: 3px solid #e7e7e7;
}

td.center {
    text-align: center;
}

td input[type="checkbox"] {
    width: 16px;
    height: 16px;
    vertical-align: middle;
}

td button {
    vertical-align: middle;
}

td button svg {
    display: block;
    width: 12px;
    height: 12px;
}

.w-item {
    width: 12%;
}

.w-desc {
    width: 24.5%;
}

.w-qty {
    width: 7%;
}

.w-num {
    width: 9%;
}

.w-tax {
    width: 6%;
}

.w-act {
    width: 4%;
}

.notes {
    display: grid;
    grid-template-columns: repeat(3, minmax(0, 16fr)) minmax(0, 15fr);
    gap: 18px;
    margin: 5px 0 0 3px;
}

.note {
    position: relative;
}

.note textarea {
    height: 74px;
}

.note svg {
    position: absolute;
    top: 3px;
    right: 20px;
    width: 13px;
    height: 13px;
    color: #000;
}

.tax-box {
    display: grid;
    grid-template-columns: 1fr 1fr;
    gap: 9px;
    padding: 10px 11px 0 8px;
    background: #bfcacf;
}

.tax-box select {
    border-left-color: #bfcacf;
}

/* payment column */
.payment {
    align-self: start;
    border-color: #c6dce4;
    background: #c6dce4;
}

.payment legend {
    border: 1px solid #1580ae;
    background: #3889ae;
    color: #fff;
}

.pay-icons {
    display: flex;
    gap: 3px;
    margin-left: auto;
}

.pay-icons svg {
    width: 30px;
    height: 20px;
    fill: none;
    stroke: #d5edf7;
    stroke-width: 1.400;
}

.pay-icons .wide {
    width: 34px;
}

.card-form {
    display: grid;
    grid-template-columns: repeat(2, minmax(0, 1fr));
    gap: 4px;
    padding-top: 5px;
    color: #333;
    font: 11px Inter, sans-serif;
}

.full {
    grid-column: 1 / -1;
}

.payment .method {
    border-left: 5px solid #f00;
    font: 700 12px Inter, sans-serif;
}

.order .tall[type="text"] {
    height: 26px;
}

.card-row {
    display: flex;
    align-items: center;
    gap: 4px;
}

.order .card-row select {
    width: 129px;
}

.toggle {
    display: flex;
    align-items: center;
    gap: 7px;
    width: 53px;
    height: 20px;
    padding: 0 2px;
    border-radius: 10px;
    background: #ed5565;
    color: #fff;
    font-size: 10px;
    font-weight: 700;
}

.knob {
    width: 16px;
    height: 16px;
    border-radius: 50%;
    background: #fff;
}

.save {
    display: flex;
    align-items: center;
    gap: 6px;
    height: 17px;
}

.save input[type="checkbox"] {
    width: 15px;
    height: 15px;
    border-color: #888;
}

.totals {
    display: grid;
    grid-template-columns: minmax(0, 107fr) minmax(0, 75fr) minmax(0, 57fr) minmax(0, 83fr);
    row-gap: 6px;
    margin: 20px 11px 0 0;
}

.totals + .totals {
    margin-top: 6px;
}

.totals label {
    padding: 0 15px 0 0;
    color: #000;
    font: 700 13px/19px Inter, sans-serif;
    text-align: right;
}

.totals .mid {
    padding-right: 0;
    text-align: center;
}

.totals input[type="text"] {
    padding: 2px 5px 0;
    text-align: right;
}

.totals .span {
    grid-column: 2 / -1;
}

.totals .bold {
    font-weight: 700;
}

.totals input[type="text"]:read-only {
    background-color: #b0cfdb;
}

.taxes {
    row-gap: 0;
}

.footer {
    flex: none;
    height: 33px;
    padding: 6px 0 0 134px;
    border-top: 1px solid #e0e0e0;
    border-bottom: 4px solid #e6ecf6;
    font-size: 14px;
    line-height: 18px;
    box-shadow: inset 0 -1px #b5b5b5;
}
```
